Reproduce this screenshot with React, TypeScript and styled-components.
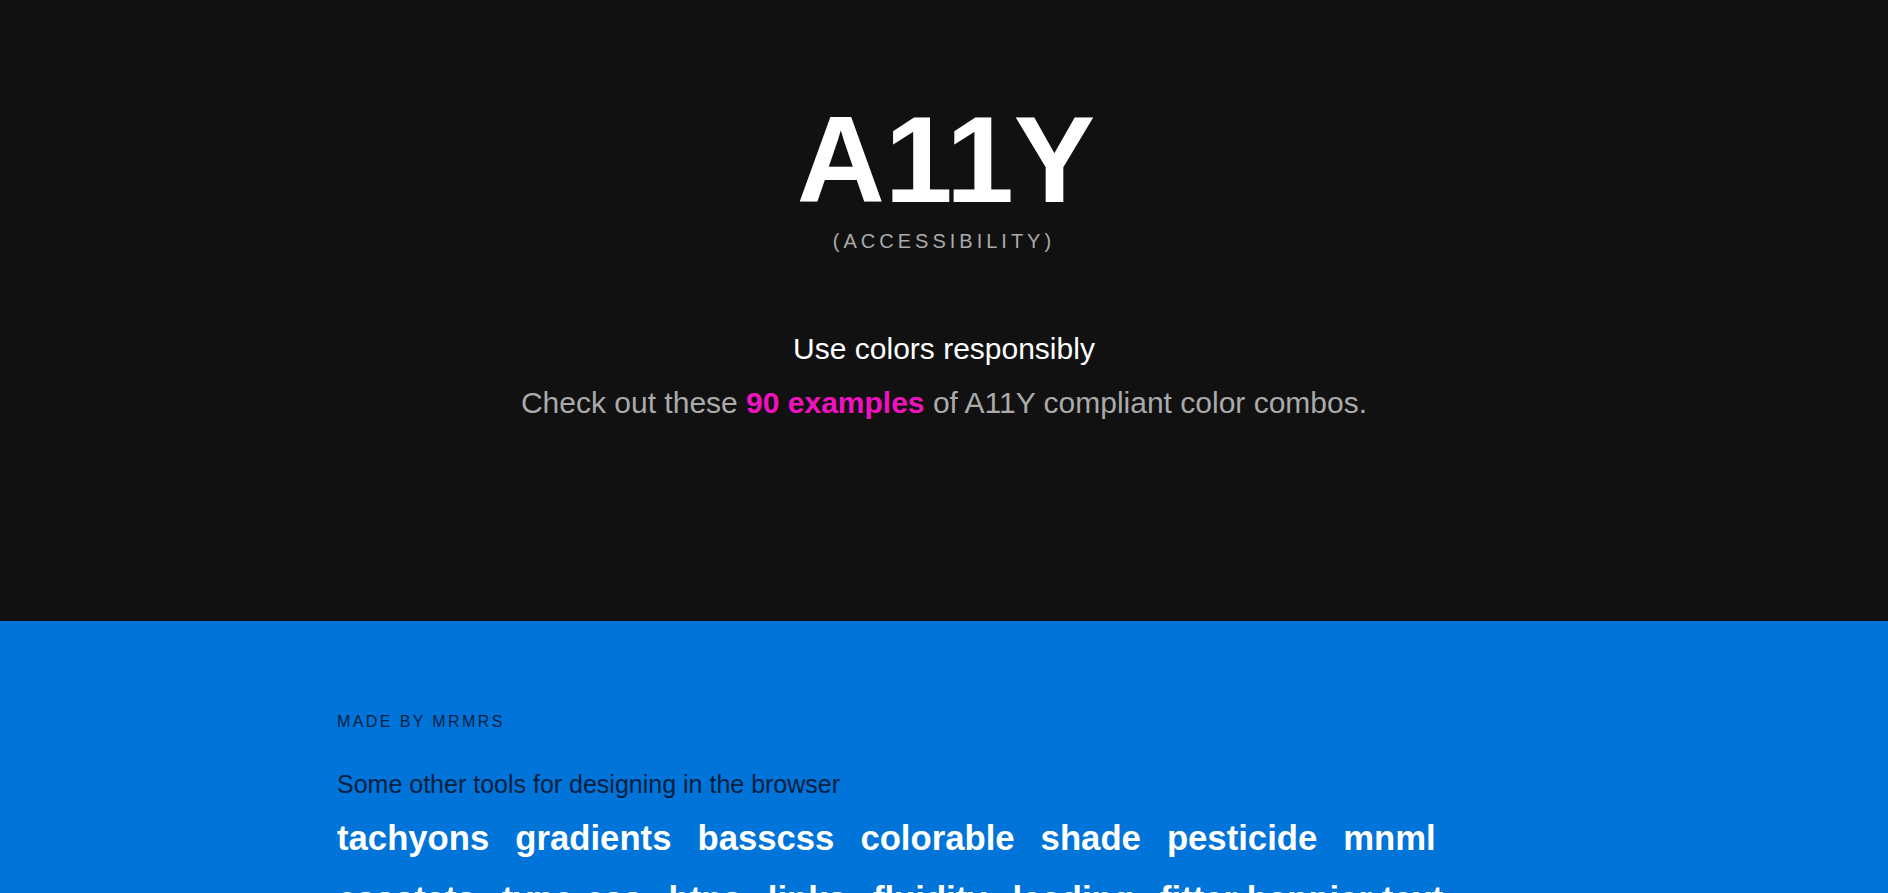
import React from 'react';
import styled, { createGlobalStyle } from 'styled-components';

const GlobalStyle = createGlobalStyle`
  html, body {
    margin: 0;
    padding: 0;
    background: #111111;
  }
  body {
    font-family: "Liberation Sans", Arial, Helvetica, sans-serif;
    -webkit-font-smoothing: antialiased;
  }
  * {
    box-sizing: border-box;
  }
`;

const tools = [
  'tachyons',
  'gradients',
  'basscss',
  'colorable',
  'shade',
  'pesticide',
  'mnml',
  'cssstats',
  'type-css',
  'btns',
  'links',
  'fluidity',
  'leading',
  'fitter happier text',
];

// Hero
const Hero = styled.header`
  height: 621px;
  background: #111111;
  padding-top: 99px;
  text-align: center;
`;

const Title = styled.h1`
  margin: 0;
  padding-left: 4px;
  font-size: 122px;
  line-height: 1;
  font-weight: 700;
  color: #ffffff;
`;

const Subtitle = styled.h2`
  margin: 10px 0 0;
  font-size: 20px;
  line-height: 1;
  font-weight: 400;
  letter-spacing: 4px;
  text-transform: uppercase;
  color: #aaaaaa;
`;

const Lead = styled.p<{ muted?: boolean }>`
  margin: ${props => (props.muted ? '9px' : '75px')} 0 0;
  font-size: 30px;
  line-height: 1.5;
  color: ${props => (props.muted ? '#aaaaaa' : '#ffffff')};
`;

const Highlight = styled.a`
  color: #f012be;
  font-weight: 700;
  text-decoration: none;
`;

// Footer
const Footer = styled.footer`
  background: #0074d9;
  padding: 89px 0 80px;
`;

const Container = styled.div`
  max-width: 1214px;
  margin: 0 auto;
`;

const Credit = styled.h3`
  margin: 0;
  font-size: 16px;
  line-height: 1.5;
  font-weight: 400;
  letter-spacing: 2.4px;
  text-transform: uppercase;
  color: #001f3f;
`;

const Blurb = styled.p`
  margin: 32px 0 0;
  font-size: 25px;
  line-height: 1.5;
  color: #001f3f;
`;

const ToolList = styled.nav`
  margin-top: 8px;
  display: flex;
  flex-wrap: wrap;
  column-gap: 26px;
  row-gap: 9px;
`;

const ToolLink = styled.a`
  font-size: 34.7px;
  line-height: 1.5;
  font-weight: 700;
  color: #ffffff;
  text-decoration: none;
  white-space: nowrap;
`;

export default function App() {
  return (
    <>
      <GlobalStyle />
      <Hero>
        <Title>A11Y</Title>
        <Subtitle>(Accessibility)</Subtitle>
        <Lead>Use colors responsibly</Lead>
        <Lead muted>
          Check out these <Highlight href="#">90 examples</Highlight> of A11Y compliant color combos.
        </Lead>
      </Hero>
      <Footer>
        <Container>
          <Credit>Made by mrmrs</Credit>
          <Blurb>Some other tools for designing in the browser</Blurb>
          <ToolList>
            {tools.map(tool => (
              <ToolLink key={tool} href="#">
                {tool}
              </ToolLink>
            ))}
          </ToolList>
        </Container>
      </Footer>
    </>
  );
}
